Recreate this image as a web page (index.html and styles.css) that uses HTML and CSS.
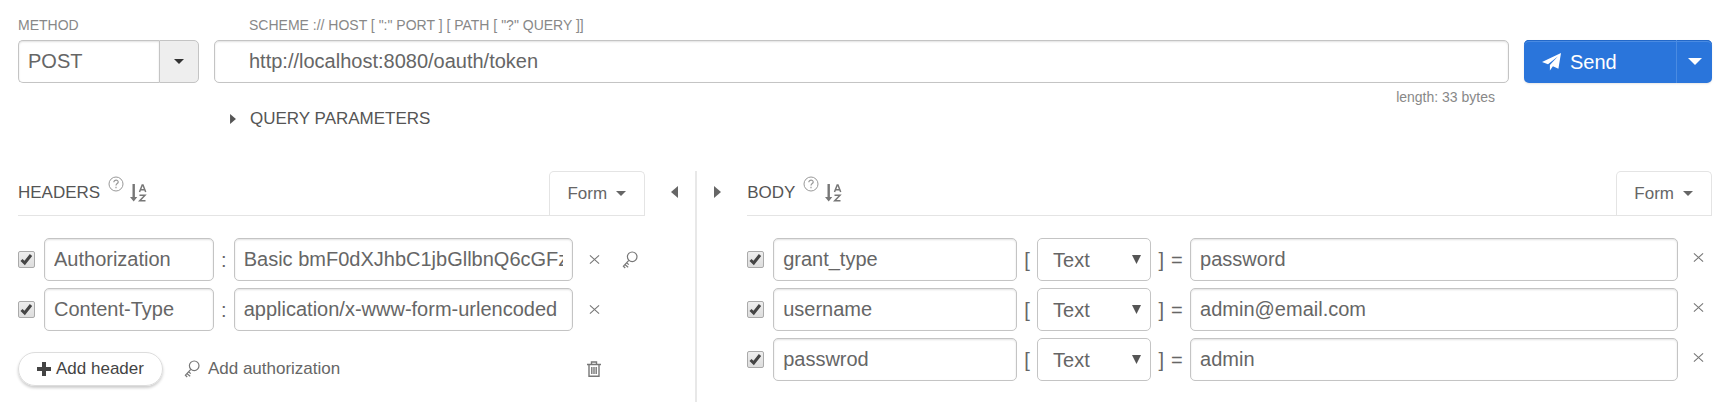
FILE: index.html
```html
<!DOCTYPE html>
<html lang="en">

<head>
  <meta charset="utf-8">
  <title>Request</title>
  <link rel="stylesheet" href="styles.css">
</head>

<body>
  <svg class="sprite" aria-hidden="true">
    <symbol id="close" viewBox="0 0 12 12">
      <path d="M1 1.5l10 9M11 1.5l-10 9" fill="none" stroke="currentColor" stroke-width="1.2" />
    </symbol>
    <symbol id="key" viewBox="0 0 16 18">
      <g fill="none" stroke="currentColor" stroke-width="1.2">
        <circle cx="10.2" cy="5.8" r="4.8" />
        <path d="M6.8 9.4L1 15.6M2.8 13.6l3.4 2.6M1.2 15l2 2M4.6 11.8l2.2 1.8" />
      </g>
    </symbol>
    <symbol id="sort" viewBox="0 0 17 18">
      <path d="M2.5 0h2.4v13h2.4L3.7 17.5 0 13h2.5z" fill="currentColor" />
      <path d="M9.5 8L12.2 1h.8l2.7 7M10.5 5.8h4.2M9.5 11.2h5.5L9.7 16.8h5.8" fill="none" stroke="currentColor" stroke-width="1.5" />
    </symbol>
    <symbol id="help" viewBox="0 0 16 16">
      <circle cx="8" cy="8" r="7" fill="none" stroke="currentColor" />
      <path d="M5.8 6.3c0-3 4.6-2.800 4.400-.2-.1 1.500-2.200 1.500-2.200 3.400M8 10.800v1.400" fill="none" stroke="currentColor" stroke-width="1.2" />
    </symbol>
    <symbol id="down" viewBox="0 0 10 5">
      <path d="M0 0h10L5 5z" fill="currentColor" />
    </symbol>
    <symbol id="right" viewBox="0 0 7 12">
      <path d="M0 0l7 6-7 6z" fill="currentColor" />
    </symbol>
    <symbol id="left" viewBox="0 0 7 12">
      <path d="M7 0L0 6l7 6z" fill="currentColor" />
    </symbol>
  </svg>

  <form class="request">
    <div class="method">
      <label class="caption" for="method">METHOD</label>
      <div class="combo">
        <input class="field combo-input" type="text" id="method" value="POST">
        <button class="combo-button" type="button" aria-label="Choose method"><svg class="caret"><use href="#down" /></svg></button>
      </div>
    </div>
    <div class="url">
      <label class="caption url-caption" for="url">SCHEME :// HOST [ ":" PORT ] [ PATH [ "?" QUERY ]]</label>
      <input class="field url-input" type="text" id="url" value="http://localhost:8080/oauth/token">
      <div class="length">length: 33 bytes</div>
      <button class="query" type="button"><svg class="arrow"><use href="#right" /></svg>QUERY PARAMETERS</button>
    </div>
    <div class="send">
      <button class="send-main" type="submit">
        <svg class="plane" viewBox="0 0 19 18"><path d="M19 0l-2.6 15.8-5.5-2.5-3 4.2v-5.6L15.8 3.4 6 11.2 0 8.9z" fill="currentColor" /></svg>Send
      </button>
      <button class="send-more" type="button" aria-label="More send options"><svg class="send-caret"><use href="#down" /></svg></button>
    </div>
  </form>

  <div class="panes">
    <section class="pane">
      <div class="pane-head">
        <h2 class="title">HEADERS</h2>
        <button class="icon help" type="button" aria-label="Help"><svg class="help-icon"><use href="#help" /></svg></button>
        <button class="icon sort" type="button" aria-label="Sort headers"><svg class="sort-icon"><use href="#sort" /></svg></button>
        <button class="tab" type="button">Form <svg class="caret"><use href="#down" /></svg></button>
      </div>
      <div class="row header-row">
        <input class="check" type="checkbox" checked aria-label="Use Authorization">
        <input class="field" type="text" value="Authorization" aria-label="Header name">
        <span class="sign">:</span>
        <input class="field" type="text" value="Basic bmF0dXJhbC1jbGllbnQ6cGFzc3dvcmQ=" aria-label="Header value">
        <button class="icon" type="button" aria-label="Remove"><svg class="close-icon"><use href="#close" /></svg></button>
        <button class="icon" type="button" aria-label="Edit authorization"><svg class="key-icon"><use href="#key" /></svg></button>
      </div>
      <div class="row header-row">
        <input class="check" type="checkbox" checked aria-label="Use Content-Type">
        <input class="field" type="text" value="Content-Type" aria-label="Header name">
        <span class="sign">:</span>
        <input class="field" type="text" value="application/x-www-form-urlencoded" aria-label="Header value">
        <button class="icon" type="button" aria-label="Remove"><svg class="close-icon"><use href="#close" /></svg></button>
      </div>
      <div class="actions">
        <button class="add" type="button"><svg class="plus" viewBox="0 0 14 14"><path d="M5 0h4v5h5v4H9v5H5V9H0V5h5z" fill="currentColor" /></svg>Add header</button>
        <button class="auth" type="button"><svg class="key-icon"><use href="#key" /></svg>Add authorization</button>
        <button class="icon trash" type="button" aria-label="Remove all headers">
          <svg class="trash-icon" viewBox="0 0 14 16"><path d="M0 3.5h14M4.5 3V1h5v2M2 3.500v11.700h10V3.500M4.800 6v7M7 6v7M9.200 6v7" fill="none" stroke="currentColor" stroke-width="1.4" /></svg>
        </button>
      </div>
    </section>

    <div class="splitter">
      <button class="icon collapse" type="button" aria-label="Collapse headers"><svg class="arrow"><use href="#left" /></svg></button>
      <button class="icon collapse collapse-right" type="button" aria-label="Collapse body"><svg class="arrow"><use href="#right" /></svg></button>
    </div>

    <section class="pane">
      <div class="pane-head">
        <h2 class="title">BODY</h2>
        <button class="icon help" type="button" aria-label="Help"><svg class="help-icon"><use href="#help" /></svg></button>
        <button class="icon sort" type="button" aria-label="Sort fields"><svg class="sort-icon"><use href="#sort" /></svg></button>
        <button class="tab" type="button">Form <svg class="caret"><use href="#down" /></svg></button>
      </div>
      <div class="row body-row">
        <input class="check" type="checkbox" checked aria-label="Use grant_type">
        <input class="field" type="text" value="grant_type" aria-label="Field name">
        <span class="sign">[</span>
        <select class="field type" aria-label="Field type"><option>Text</option><option>File</option></select>
        <span class="sign sign-pair"><span>]</span><span>=</span></span>
        <input class="field" type="text" value="password" aria-label="Field value">
        <button class="icon remove" type="button" aria-label="Remove"><svg class="close-icon"><use href="#close" /></svg></button>
      </div>
      <div class="row body-row">
        <input class="check" type="checkbox" checked aria-label="Use username">
        <input class="field" type="text" value="username" aria-label="Field name">
        <span class="sign">[</span>
        <select class="field type" aria-label="Field type"><option>Text</option><option>File</option></select>
        <span class="sign sign-pair"><span>]</span><span>=</span></span>
        <input class="field" type="text" value="admin@email.com" aria-label="Field value">
        <button class="icon remove" type="button" aria-label="Remove"><svg class="close-icon"><use href="#close" /></svg></button>
      </div>
      <div class="row body-row">
        <input class="check" type="checkbox" checked aria-label="Use passwrod">
        <input class="field" type="text" value="passwrod" aria-label="Field name">
        <span class="sign">[</span>
        <select class="field type" aria-label="Field type"><option>Text</option><option>File</option></select>
        <span class="sign sign-pair"><span>]</span><span>=</span></span>
        <input class="field" type="text" value="admin" aria-label="Field value">
        <button class="icon remove" type="button" aria-label="Remove"><svg class="close-icon"><use href="#close" /></svg></button>
      </div>
    </section>
  </div>
</body>

</html>
```
FILE: styles.css
```css
* {
  box-sizing: border-box;
}

body {
  display: flex;
  flex-direction: column;
  gap: 42px;
  min-height: 100vh;
  margin: 0;
  padding: 15px 18px 0;
  background: #fff;
  color: #666;
  font-family: "Liberation Sans", Arial, sans-serif;
  font-size: 17px;
  line-height: 20px;
}

button,
input,
select {
  margin: 0;
  color: inherit;
  font: inherit;
}

button {
  padding: 0;
  border: none;
  background: none;
  cursor: pointer;
}

svg {
  display: block;
  flex: none;
}

.sprite {
  display: none;
}

.field {
  width: 100%;
  min-width: 0;
  height: 43px;
  padding: 0 9px;
  border: 1px solid #c4c4c4;
  border-radius: 5px;
  background: #fff;
  box-shadow: inset 0 1px 2px rgba(0, 0, 0, 0.12);
  color: #666;
  font-size: 20px;
}

/* request line */

.request {
  display: grid;
  grid-template-columns: 181px 1fr 188px;
  gap: 15px;
}

.caption {
  display: block;
  margin-bottom: 5px;
  color: #888;
  font-size: 14px;
}

.combo {
  display: flex;
}

.combo-input {
  flex: 1;
  border-right: none;
  border-radius: 5px 0 0 5px;
}

.combo-button {
  display: flex;
  align-items: center;
  justify-content: center;
  width: 40px;
  border: 1px solid #c4c4c4;
  border-radius: 0 5px 5px 0;
  background: #eee;
  color: #333;
}

.caret {
  width: 10px;
  height: 5px;
}

.url-caption {
  padding-left: 35px;
}

.url-input {
  display: block;
  padding-left: 34px;
}

.length {
  padding: 4px 14px 0 0;
  color: #888;
  font-size: 14px;
  text-align: right;
}

.query {
  display: flex;
  align-items: center;
  gap: 14px;
  padding: 2px 0 0 16px;
  color: #555;
}

.arrow {
  width: 7px;
  height: 12px;
}

.query .arrow {
  width: 6px;
  height: 10px;
}

.send {
  display: flex;
  height: 43px;
  margin-top: 25px;
  border-radius: 5px;
  background: #2a75db;
  box-shadow: inset 0 1px 0 #2368c8, inset 0 2px 0 #4a8be2, 0 1px 2px rgba(0, 0, 0, 0.1);
  color: #fff;
  font-size: 20px;
  text-shadow: 0 -1px 0 rgba(0, 0, 0, 0.25);
}

.send-main {
  display: flex;
  flex: 1;
  align-items: center;
  gap: 9px;
  padding-left: 18px;
}

.plane {
  width: 19px;
  height: 18px;
}

.send-more {
  display: flex;
  align-items: center;
  justify-content: center;
  width: 36px;
  border-left: 1px solid #4a8be2;
}

.send-caret {
  width: 14px;
  height: 7px;
}

/* headers and body */

.panes {
  display: grid;
  flex: 1;
  grid-template-columns: 13fr 102px 20fr;
}

.pane {
  min-width: 0;
}

.pane-head {
  display: flex;
  align-items: center;
  height: 45px;
  margin-bottom: 22px;
  border-bottom: 1px solid #e4e4e4;
}

.title {
  margin: 0;
  color: #555;
  font-size: 17px;
  font-weight: normal;
}

.icon {
  display: flex;
  align-items: center;
  justify-content: center;
  color: #777;
}

.help {
  align-self: flex-start;
  margin: 5px 6px 0 8px;
  color: #999;
}

.help-icon {
  width: 16px;
  height: 16px;
}

.sort-icon {
  width: 17px;
  height: 18px;
}

.tab {
  display: flex;
  align-items: center;
  gap: 9px;
  height: 45px;
  margin-left: auto;
  padding: 0 18px 0 17px;
  border: 1px solid #e4e4e4;
  border-bottom: none;
  border-radius: 5px 5px 0 0;
}

.row {
  display: grid;
  align-items: center;
  margin-bottom: 7px;
}

.header-row {
  grid-template-columns: 26px 1fr 20px 2fr 42px 30px;
}

.body-row {
  grid-template-columns: 26px 1fr 20px 114px 39px 2fr 34px;
}

.check {
  appearance: none;
  width: 17px;
  height: 17px;
  border: 1px solid #aaa;
  border-radius: 2px;
  background: linear-gradient(#eee, #ddd);
}

.check:checked {
  background: url("data:image/svg+xml,%3Csvg xmlns='http://www.w3.org/2000/svg' viewBox='0 0 15 15'%3E%3Cpath d='M2.5 8l3.2 3 6.300-8' fill='none' stroke='%23444' stroke-width='3'/%3E%3C/svg%3E"), linear-gradient(#eee, #ddd);
}

.sign {
  font-size: 20px;
  text-align: center;
}

.sign-pair {
  display: flex;
  justify-content: center;
  gap: 7px;
}

.type {
  appearance: none;
  padding-left: 15px;
  background: #fff url("data:image/svg+xml,%3Csvg xmlns='http://www.w3.org/2000/svg' width='9' height='9'%3E%3Cpath d='M0 0h9L4.5 9z' fill='%23555'/%3E%3C/svg%3E") no-repeat right 9px center;
  box-shadow: none;
}

.close-icon {
  width: 11px;
  height: 11px;
}

.key-icon {
  width: 16px;
  height: 18px;
}

.remove {
  padding: 0 0 4px 7px;
}

.actions {
  display: flex;
  align-items: center;
  margin-top: 21px;
}

.add {
  display: flex;
  align-items: center;
  gap: 5px;
  height: 34px;
  padding: 0 18px;
  border: 1px solid #ddd;
  border-radius: 17px;
  box-shadow: 0 2px 3px rgba(0, 0, 0, 0.2);
  color: #444;
}

.plus {
  width: 14px;
  height: 14px;
}

.auth {
  display: flex;
  align-items: center;
  gap: 8px;
  margin-left: 21px;
}

.auth .key-icon {
  color: #777;
}

.trash {
  width: 42px;
  margin: 0 30px 0 auto;
}

.trash-icon {
  width: 14px;
  height: 16px;
}

/* divider between the two panes */

.splitter {
  display: grid;
  grid-template-columns: 52px 1fr;
}

.collapse {
  align-items: flex-start;
  padding: 15px 0 0 8px;
  border-right: 2px solid #e8e8e8;
  color: #666;
}

.collapse-right {
  justify-content: flex-start;
  padding-left: 17px;
  border-right: none;
}
```
